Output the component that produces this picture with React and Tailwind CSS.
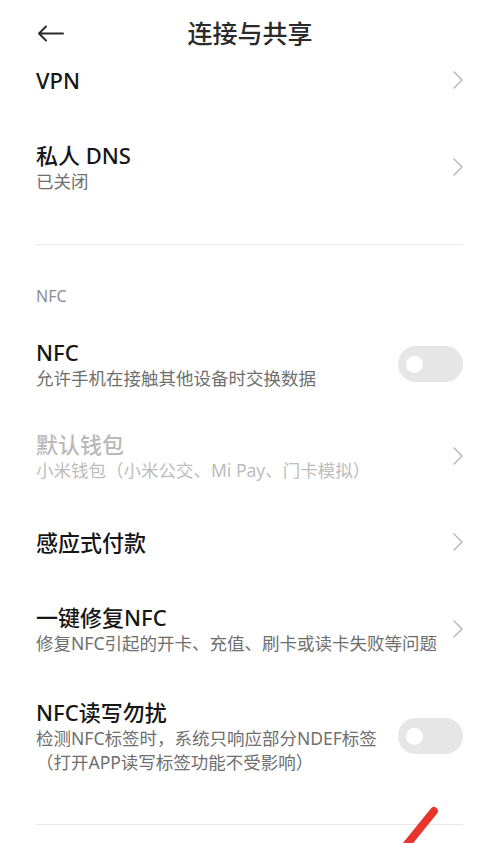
const font = { fontFamily: '"Noto Sans", "Noto Sans CJK SC", sans-serif' }

function Chevron() {
  return (
    <svg width="10" height="18" viewBox="0 0 10 18" className="shrink-0">
      <polyline points="1,1 9,9 1,17" fill="none" stroke="#b4b4b4" strokeWidth="1.4" strokeLinecap="round" strokeLinejoin="round" />
    </svg>
  )
}

function Toggle() {
  return (
    <div className="flex h-[36px] w-[65px] shrink-0 items-center rounded-full bg-[#e6e6e6] pl-[8px]">
      <div className="h-[17px] w-[17px] rounded-full bg-white" />
    </div>
  )
}

function Row({ title, sub, right, disabled, className }) {
  return (
    <div className={'flex items-center justify-between gap-4 ' + className}>
      <div className="min-w-0">
        <p className={'text-[22px] font-medium leading-[28px] ' + (disabled ? 'text-[#b9b9b9]' : 'text-[#161616]')}>
          {title}
        </p>
        {sub &&
          sub.map((s) => (
            <p key={s} className={'text-[17.5px] leading-[24px] ' + (disabled ? 'text-[#bdbdbd]' : 'text-[#6f6f6f]')}>
              {s}
            </p>
          ))}
      </div>
      {right === 'toggle' ? <Toggle /> : <Chevron />}
    </div>
  )
}

export default function App() {
  return (
    <div className="relative h-[843px] w-[500px] overflow-hidden bg-white" style={font}>
      <header className="grid h-[66px] grid-cols-[1fr_auto_1fr] items-center px-[37px]">
        <svg width="27" height="17" viewBox="0 0 27 17">
          <path d="M26 8.5H2M9 1.5L2 8.5l7 7" fill="none" stroke="#2b2b2b" strokeWidth="2" strokeLinecap="round" strokeLinejoin="round" />
        </svg>
        <h1 className="text-[25px] font-medium leading-[32px] text-[#2a2a2a]">连接与共享</h1>
        <div />
      </header>

      <div className="pl-[36px] pr-[37px]">
        <Row title="VPN" className="" />
        <Row title="私人 DNS" sub={['已关闭']} className="mt-[47px]" />
        <div className="mt-[51px] h-px bg-[#e8e8e8]" />
        <p className="mt-[41px] text-[16px] leading-[20px] text-[#8d8d93]">NFC</p>
        <Row title="NFC" sub={['允许手机在接触其他设备时交换数据']} right="toggle" className="mt-[32px]" />
        <Row title="默认钱包" sub={['小米钱包（小米公交、Mi Pay、门卡模拟）']} disabled className="mt-[40px]" />
        <Row title="感应式付款" className="mt-[46px]" />
        <Row title="一键修复NFC" sub={['修复NFC引起的开卡、充值、刷卡或读卡失败等问题']} className="mt-[47px]" />
        <Row
          title="NFC读写勿扰"
          sub={['检测NFC标签时，系统只响应部分NDEF标签', '（打开APP读写标签功能不受影响）']}
          right="toggle"
          className="mt-[43px]"
        />
        <div className="mt-[50px] h-px bg-[#e8e8e8]" />
      </div>

      <svg className="absolute left-[396px] top-[804px]" width="46" height="44" viewBox="0 0 46 44">
        <path d="M38 7L8 44" stroke="#e8352b" strokeWidth="8" strokeLinecap="round" />
      </svg>
    </div>
  )
}
